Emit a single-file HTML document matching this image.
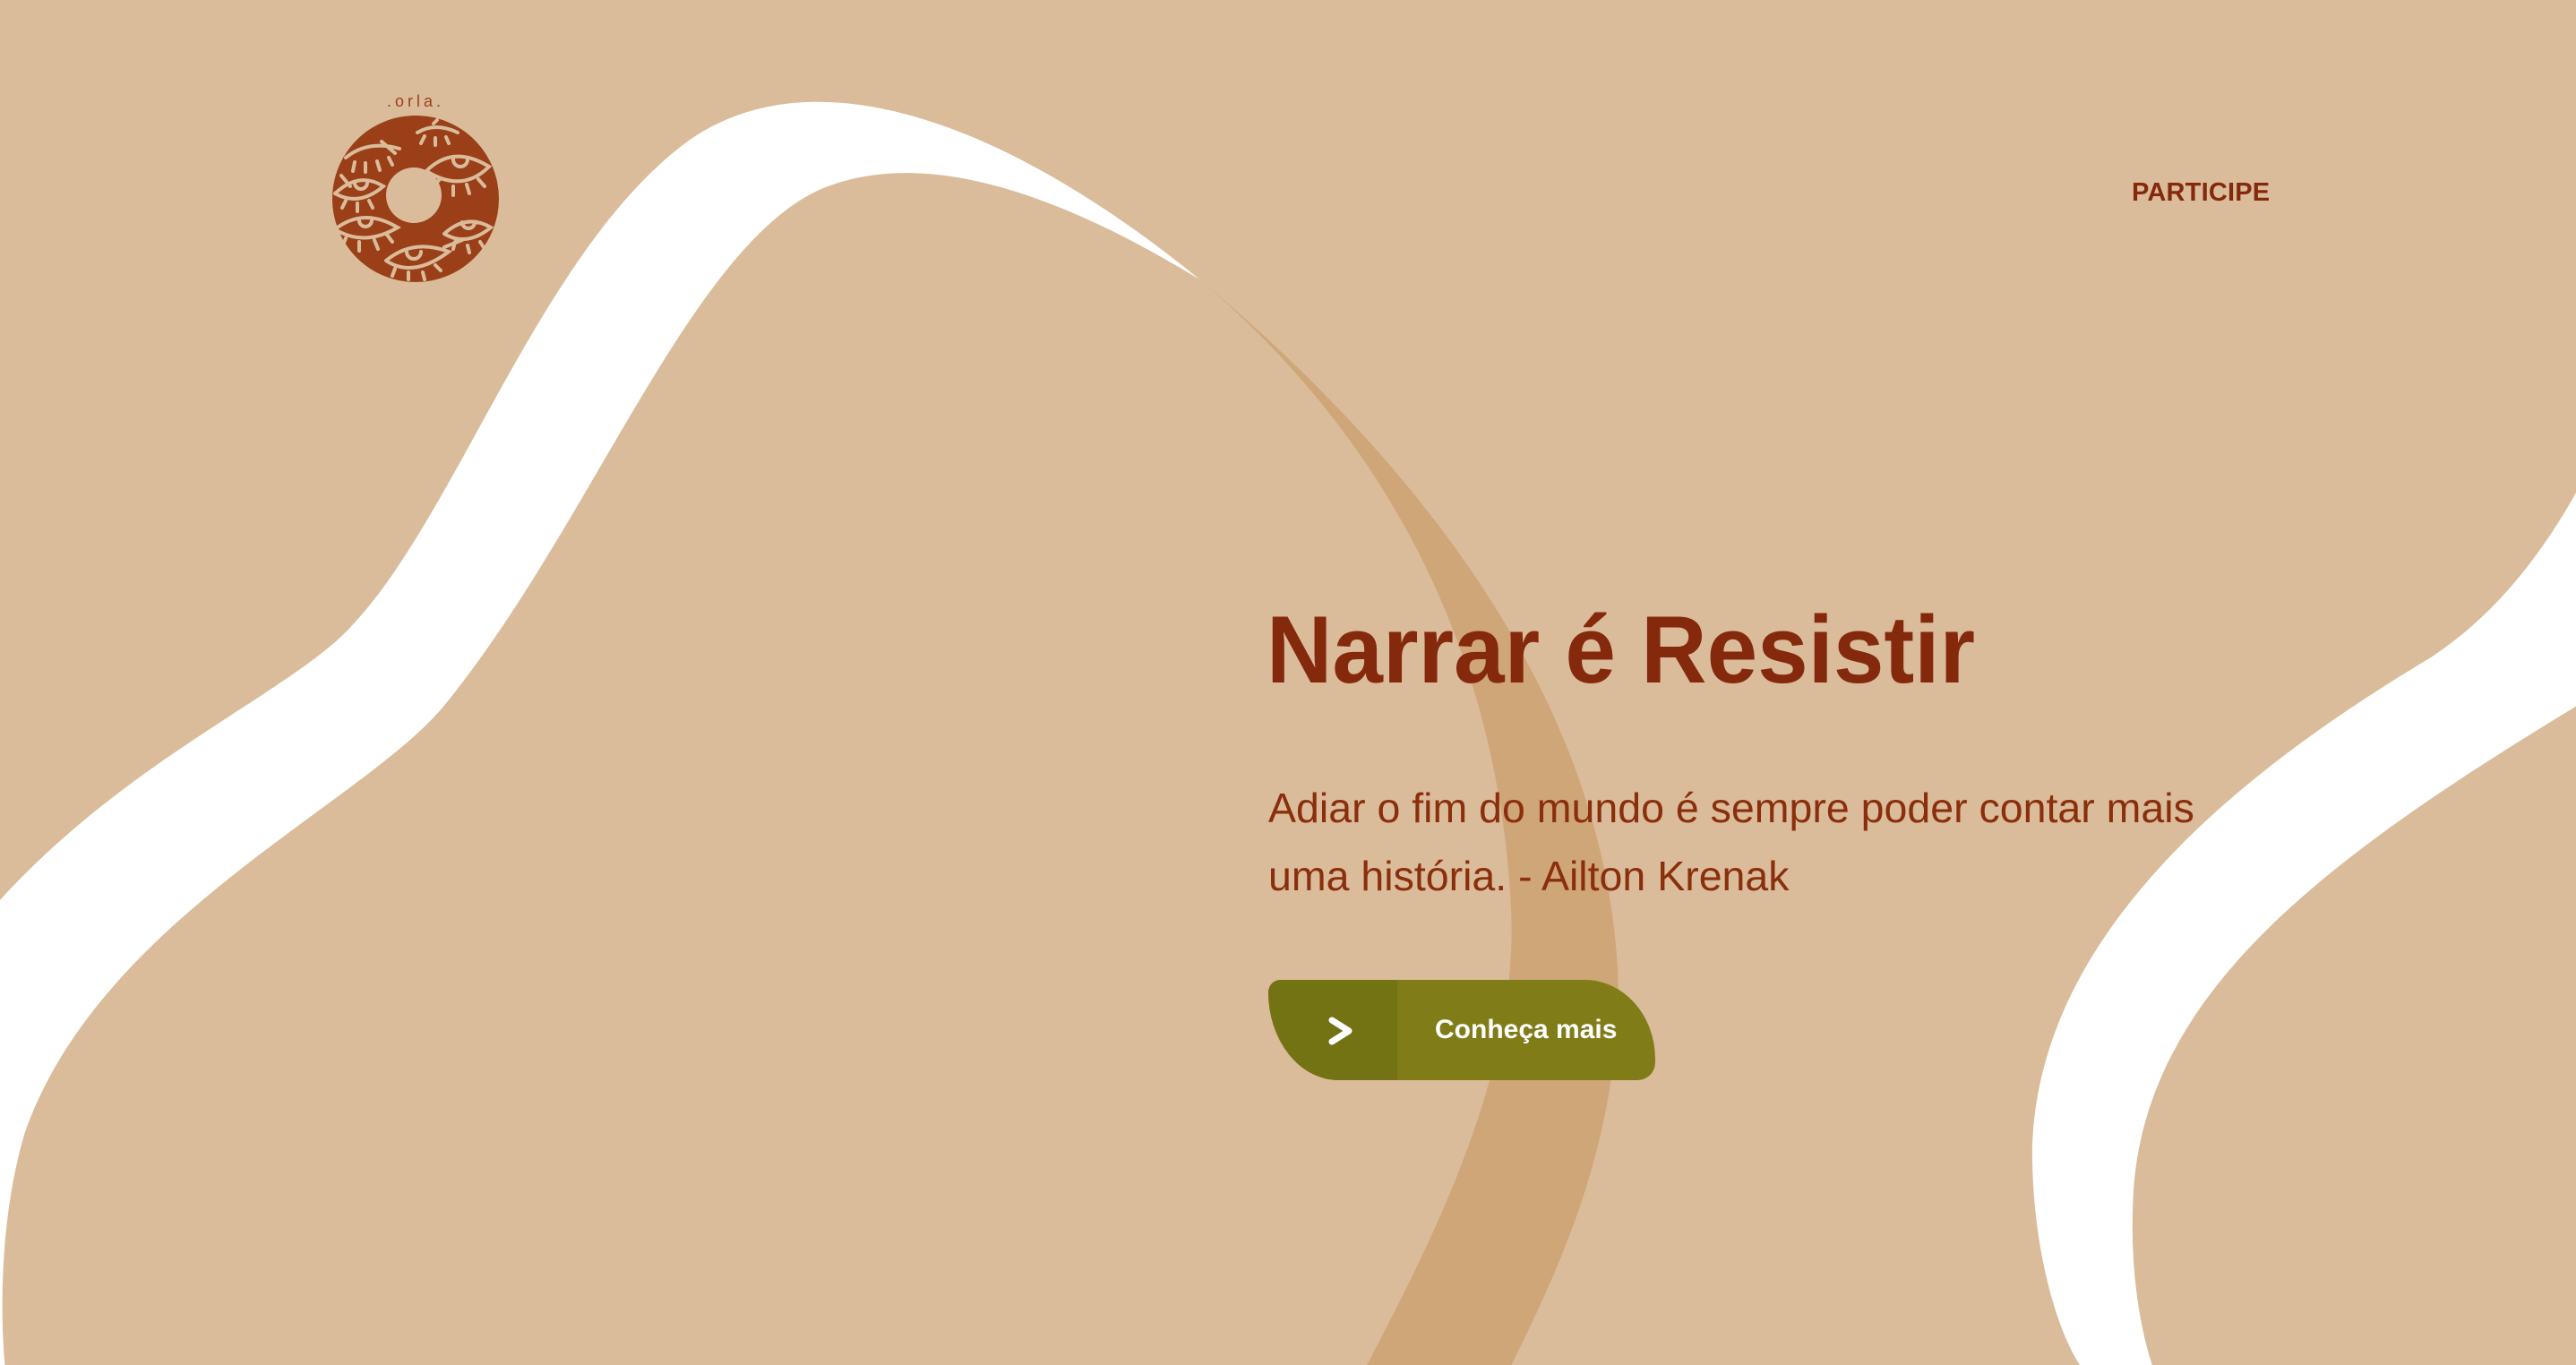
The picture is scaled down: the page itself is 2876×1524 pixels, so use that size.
<!DOCTYPE html>
<html><head><meta charset="utf-8">
<style>
html,body{margin:0;padding:0;}
body{width:2876px;height:1524px;overflow:hidden;background:#dabc9b;position:relative;font-family:"Liberation Sans",sans-serif;}
svg.bg{position:absolute;left:0;top:0;width:2876px;height:1524px;}
.logo{position:absolute;left:366px;top:96px;width:196px;height:220px;}
.nav{position:absolute;left:2380px;top:199px;font-size:29px;font-weight:bold;color:#85290d;letter-spacing:0.2px;}
h1{position:absolute;left:1414px;top:660px;margin:0;font-size:107px;line-height:130px;font-weight:bold;color:#85290d;white-space:nowrap;transform:scaleX(0.95);transform-origin:left top;}
.sub{position:absolute;left:1416px;top:864px;width:1200px;font-size:46.5px;line-height:76px;color:#8a2e0c;white-space:nowrap;}
.btn{position:absolute;left:1416px;top:1094px;width:432px;height:112px;background:#807c18;border-radius:14px 80px 20px 80px / 14px 90px 20px 100px;overflow:hidden;}
.btn .l{position:absolute;left:0;top:0;width:144px;height:112px;background:#747314;}
.btn .t{position:absolute;left:186px;top:0;line-height:112px;font-size:30px;font-weight:bold;color:#fff;}
.btn svg{position:absolute;left:66px;top:40px;}
</style></head><body>
<svg class="bg" viewBox="0 0 1568 831" preserveAspectRatio="none">
<path fill="#fff" d="M0,548 C80,460 180,420 215,380 C280,310 330,150 420,85 C500,30 620,80 730,170 C640,115 560,90 500,115 C420,150 360,320 270,430 C220,490 60,560 15,690 C0,740 0,800 3,831 L0,831 Z"/>
<path fill="#cfa677" d="M730,170 C850,270 980,420 985,600 C985,700 945,780 920,831 L832,831 C880,740 922,650 920,560 C915,420 860,280 730,170 Z"/>
<path fill="#fff" d="M1568,300 C1540,350 1510,380 1480,400 C1380,460 1240,560 1237,700 C1237,760 1252,810 1266,831 L1310,831 C1300,800 1296,760 1299,720 C1310,600 1420,520 1568,430 Z"/>
</svg>
<svg class="logo" viewBox="0 0 196 220">
<text x="98" y="23" text-anchor="middle" font-family="Liberation Sans,sans-serif" font-size="18" fill="#9b3f19" letter-spacing="4">.orla.</text>
<circle cx="98" cy="126" r="93" fill="#9b3f19"/>
<circle cx="96" cy="122" r="31" fill="#dabc9b"/>
<g fill="none" stroke="#dabc9b" stroke-width="4" stroke-linecap="round">
<path d="M20,80 Q45,60 80,70 M60,62 L75,75 M30,85 L28,95 M42,86 L42,96 M55,84 L58,94 M68,80 L72,88"/>
<path d="M100,52 Q120,40 145,52 M108,56 L104,64 M120,58 L120,66 M132,57 L135,64 M118,42 L122,38"/>
<path d="M110,95 Q140,65 180,90 Q150,120 110,95 M140,82 a8,8 0 0 0 16,0 M140,112 L140,122 M155,110 L158,120 M168,104 L175,112 M125,104 L118,112"/>
<path d="M8,120 Q35,95 62,112 Q35,135 8,120 M30,108 a7,7 0 0 0 14,0 M20,128 L16,136 M33,131 L33,140 M46,128 L50,136 M15,100 L25,112"/>
<path d="M8,160 Q40,135 78,158 Q40,180 8,160 M35,150 a7,7 0 0 0 14,0 M20,170 L16,180 M35,174 L35,184 M52,172 L56,182 M66,166 L72,174"/>
<path d="M130,165 Q155,142 182,158 Q155,180 130,165 M150,152 a7,7 0 0 0 14,0 M142,174 L140,182 M156,178 L158,186 M170,174 L175,182"/>
<path d="M65,195 Q95,170 135,185 Q95,215 65,195 M88,185 a8,8 0 0 0 16,0 M75,204 L72,212 M90,208 L90,216 M106,208 L108,216 M120,200 L126,206 M130,180 L150,172"/>
</g>
</svg>
<div class="nav">PARTICIPE</div>
<h1>Narrar é Resistir</h1>
<div class="sub">Adiar o fim do mundo é sempre poder contar mais<br>uma história. - Ailton Krenak</div>
<div class="btn"><div class="l"></div>
<svg width="30" height="34" viewBox="0 0 30 34"><path d="M5,5 L24,17 L5,29" fill="none" stroke="#fff" stroke-width="7" stroke-linecap="round" stroke-linejoin="round"/></svg>
<div class="t">Conheça mais</div></div>
</body></html>
